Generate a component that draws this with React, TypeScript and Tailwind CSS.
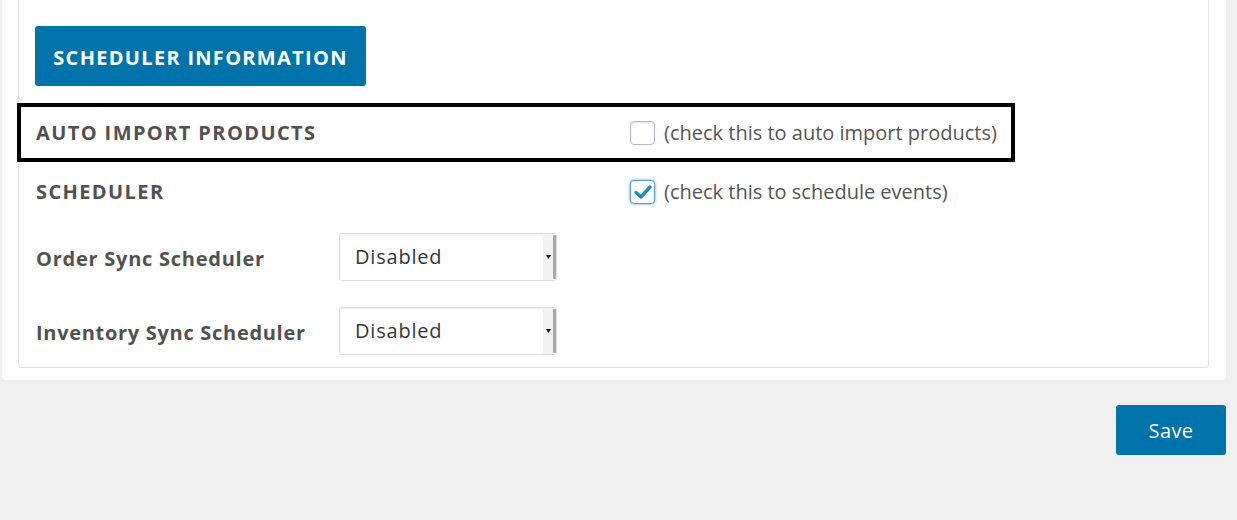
import React from "react";

const font = { fontFamily: '"Open Sans", "Noto Sans", sans-serif' };

function Checkbox({ checked }: { checked?: boolean }) {
  return (
    <span
      className={
        "inline-flex h-[24px] w-[25px] shrink-0 items-center justify-center rounded-[4px] border bg-white " +
        (checked
          ? "border-[#5b9dd9] shadow-[0_0_3px_rgba(30,140,190,0.8)]"
          : "border-[#b4b9be] shadow-[inset_0_1px_2px_rgba(0,0,0,0.1)]")
      }
    >
      {checked && (
        <svg width="18" height="16" viewBox="0 0 18 16">
          <path d="M2 8.5 L7 13 L16 3" fill="none" stroke="#1e8cbe" strokeWidth="3.4" strokeLinecap="round" strokeLinejoin="round" />
        </svg>
      )}
    </span>
  );
}

function Select() {
  return (
    <div className="flex h-[48px] w-[218px] items-stretch rounded-[3px] border border-[#dddddd] bg-white shadow-[inset_0_1px_2px_rgba(0,0,0,0.07)]">
      <div className="flex flex-1 items-center pl-[15px] text-[20px] tracking-[0.8px] text-[#32373c]">Disabled</div>
      <div className="flex w-[10px] items-center justify-center bg-[#f3f3f3]">
        <svg width="5" height="4" viewBox="0 0 5 4">
          <path d="M0 0 L5 0 L2.5 4 Z" fill="#111" />
        </svg>
      </div>
      <div className="my-[1px] w-[3px] rounded-[1px] bg-[#a9a9a9]" />
    </div>
  );
}

export default function App() {
  return (
    <div className="min-h-[520px] w-full bg-[#f0f0f0]" style={font}>
      <div className="ml-[2px] w-[1224px] rounded-b-[4px] bg-white pb-[12px] pl-[16px] pr-[17px]">
        <div className="rounded-b-[3px] border border-t-0 border-[#e2e2e2] pb-[12px]">
          <div className="pl-[16px] pt-[26px]">
            <div className="inline-flex h-[60px] w-[331px] items-center justify-center rounded-[3px] bg-[#0073aa] pt-[3px] text-[20px] font-bold tracking-[1.3px] text-white">
              SCHEDULER INFORMATION
            </div>
          </div>
          <div className="-ml-[2px] mt-[17px] flex h-[59px] w-[998px] items-center border-[4px] border-black pl-[15px]">
            <div className="w-[594px] shrink-0 text-[20px] font-bold tracking-[1.4px] text-[#515151]">AUTO IMPORT PRODUCTS</div>
            <div className="flex items-center gap-[9px] text-[20px] text-[#555555]">
              <Checkbox />
              <span>(check this to auto import products)</span>
            </div>
          </div>
          <div className="flex h-[60px] items-center pl-[17px]">
            <div className="w-[594px] shrink-0 text-[20px] font-bold tracking-[1.4px] text-[#515151]">SCHEDULER</div>
            <div className="flex items-center gap-[9px] text-[20px] text-[#555555]">
              <Checkbox checked />
              <span>(check this to schedule events)</span>
            </div>
          </div>
          <div className="flex items-center pl-[17px] pt-[11px]">
            <div className="mt-[4px] w-[303px] shrink-0 text-[20px] font-bold tracking-[0.75px] text-[#515151]">Order Sync Scheduler</div>
            <Select />
          </div>
          <div className="flex items-center pl-[17px] pt-[26px]">
            <div className="mt-[4px] w-[303px] shrink-0 text-[20px] font-bold tracking-[0.7px] text-[#515151]">Inventory Sync Scheduler</div>
            <Select />
          </div>
        </div>
      </div>
      <div className="flex w-[1226px] justify-end pt-[25px]">
        <div className="flex h-[50px] w-[110px] items-center justify-center rounded-[3px] bg-[#0073aa] pt-[1px] text-[20px] tracking-[0.4px] text-white">
          Save
        </div>
      </div>
    </div>
  );
}
